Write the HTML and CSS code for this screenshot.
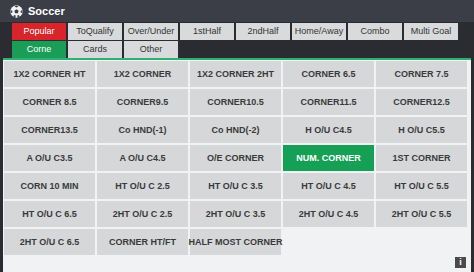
FILE: index.html
```html
<!DOCTYPE html>
<html>
<head>
<meta charset="utf-8">
<link rel="stylesheet" href="styles.css">
</head>
<body>
<div class="widget">
  <div class="header">
    <svg class="ball" width="13" height="13" viewBox="0 0 20 20">
      <circle cx="10" cy="10" r="9.5" fill="#f2f2f2"/>
      <polygon points="10,6.5 13.3,8.9 12.1,12.8 7.9,12.8 6.7,8.9" fill="#3b3e46"/>
      <path d="M10 0.6 L13 2.2 L10 4 L7 2.2 Z" fill="#3b3e46"/>
      <path d="M18.9 8 L19.2 11.6 L16.8 12.3 L16.3 8.7 Z" fill="#3b3e46"/>
      <path d="M1.1 8 L0.8 11.6 L3.2 12.3 L3.7 8.7 Z" fill="#3b3e46"/>
      <path d="M5 17.2 L7.8 19.2 L9.2 16.6 L6.6 15.3 Z" fill="#3b3e46"/>
      <path d="M15 17.2 L12.2 19.2 L10.8 16.6 L13.4 15.3 Z" fill="#3b3e46"/>
    </svg>
    <span class="title">Soccer</span>
  </div>
  <div class="tabs">
    <div class="tabrow">
      <div class="tab red">Popular</div>
      <div class="tab">ToQualify</div>
      <div class="tab">Over/Under</div>
      <div class="tab">1stHalf</div>
      <div class="tab">2ndHalf</div>
      <div class="tab">Home/Away</div>
      <div class="tab">Combo</div>
      <div class="tab">Multi Goal</div>
    </div>
    <div class="tabrow">
      <div class="tab green">Corne</div>
      <div class="tab">Cards</div>
      <div class="tab">Other</div>
    </div>
  </div>
  <div class="panel">
    <div class="grid">
      <div class="cell">1X2 CORNER HT</div>
      <div class="cell">1X2 CORNER</div>
      <div class="cell">1X2 CORNER 2HT</div>
      <div class="cell">CORNER 6.5</div>
      <div class="cell">CORNER 7.5</div>
      <div class="cell">CORNER 8.5</div>
      <div class="cell">CORNER9.5</div>
      <div class="cell">CORNER10.5</div>
      <div class="cell">CORNER11.5</div>
      <div class="cell">CORNER12.5</div>
      <div class="cell">CORNER13.5</div>
      <div class="cell">Co HND(-1)</div>
      <div class="cell">Co HND(-2)</div>
      <div class="cell">H O/U C4.5</div>
      <div class="cell">H O/U C5.5</div>
      <div class="cell">A O/U C3.5</div>
      <div class="cell">A O/U C4.5</div>
      <div class="cell">O/E CORNER</div>
      <div class="cell active">NUM. CORNER</div>
      <div class="cell">1ST CORNER</div>
      <div class="cell">CORN 10 MIN</div>
      <div class="cell">HT O/U C 2.5</div>
      <div class="cell">HT O/U C 3.5</div>
      <div class="cell">HT O/U C 4.5</div>
      <div class="cell">HT O/U C 5.5</div>
      <div class="cell">HT O/U C 6.5</div>
      <div class="cell">2HT O/U C 2.5</div>
      <div class="cell">2HT O/U C 3.5</div>
      <div class="cell">2HT O/U C 4.5</div>
      <div class="cell">2HT O/U C 5.5</div>
      <div class="cell">2HT O/U C 6.5</div>
      <div class="cell">CORNER HT/FT</div>
      <div class="cell">HALF MOST CORNER</div>
    </div>
    <div class="info">i</div>
  </div>
</div>
</body>
</html>
```
FILE: styles.css
```css
html, body {
  margin: 0;
  padding: 0;
  background: #2a2c32;
}
.widget {
  width: 474px;
  height: 272px;
  background: #2a2c32;
  font-family: "Liberation Sans", Arial, sans-serif;
  overflow: hidden;
  display: flex;
  flex-direction: column;
}
.header {
  height: 22px;
  background: #3b3e46;
  display: flex;
  align-items: center;
  padding-left: 10px;
  gap: 5px;
}
.title {
  color: #ffffff;
  font-weight: bold;
  font-size: 11px;
}
.tabs {
  padding: 1px 0 0 12px;
  display: flex;
  flex-direction: column;
  gap: 1px;
}
.tabrow {
  display: flex;
  gap: 2px;
}
.tab {
  width: 54px;
  height: 17px;
  line-height: 17px;
  text-align: center;
  background: #d9dadc;
  color: #333333;
  font-size: 9px;
}
.tab.red {
  background: #d8242b;
  color: #ffffff;
}
.tab.green {
  background: #1a9e57;
  color: #ffffff;
}
.panel {
  margin: 0 3px;
  flex: 1;
  background: #f1f2f3;
  border-top: 2px solid #2fb073;
  padding: 1px 1px 0 1px;
  position: relative;
}
.grid {
  display: grid;
  grid-template-columns: repeat(5, 91px);
  grid-auto-rows: 26px;
  gap: 2px;
}
.cell {
  background: #d5d7d9;
  color: #3a3a3a;
  font-weight: bold;
  font-size: 9px;
  display: flex;
  align-items: center;
  justify-content: center;
  white-space: nowrap;
}
.cell.active {
  background: #16a055;
  color: #ffffff;
}
.info {
  position: absolute;
  right: 5px;
  bottom: 4px;
  width: 11px;
  height: 11px;
  background: #4a4a4a;
  color: #ffffff;
  font-size: 9px;
  font-weight: bold;
  line-height: 11px;
  text-align: center;
}
```
